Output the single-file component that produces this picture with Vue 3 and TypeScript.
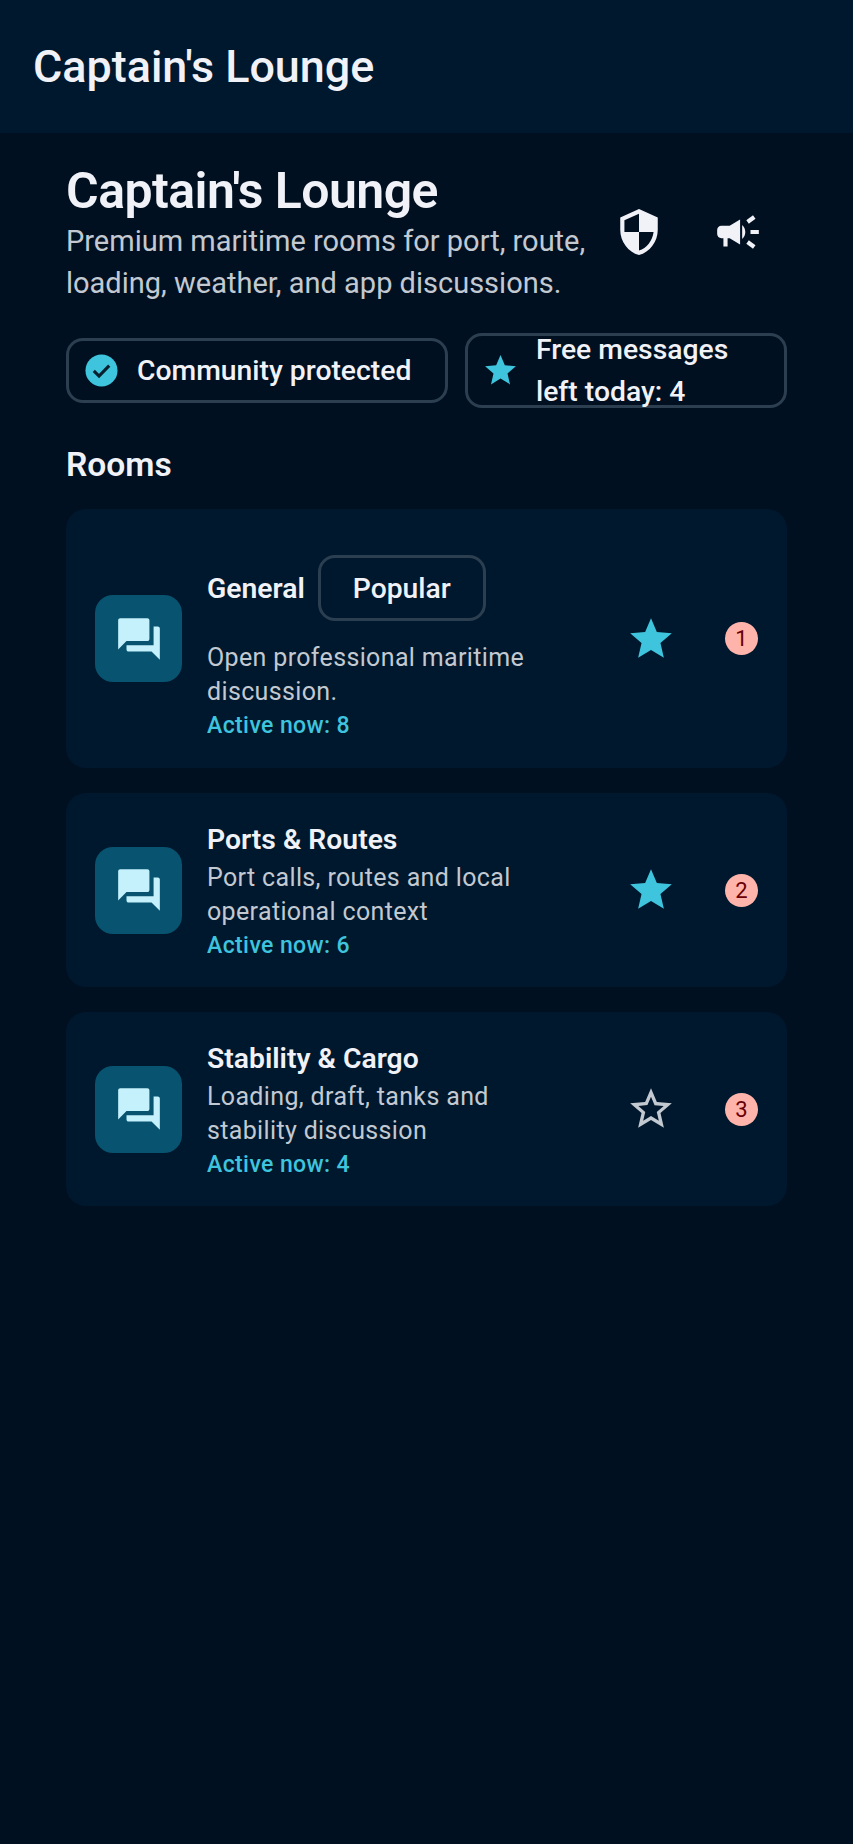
<template>
  <div class="screen">
    <header class="topbar">
      <h1 class="topbar-title">Captain's Lounge</h1>
    </header>

    <main class="content">
      <section class="hero">
        <div class="hero-text">
          <h2 class="hero-title">Captain's Lounge</h2>
          <p class="hero-sub">Premium maritime rooms for port, route, loading, weather, and app discussions.</p>
        </div>
        <div class="hero-actions">
          <svg class="action" viewBox="0 0 24 24" width="50" height="50">
            <path fill="#f1f2f8" d="M12 1 3 5v6c0 5.55 3.84 10.74 9 12 5.16-1.26 9-6.45 9-12V5l-9-4zm0 10.99h7c-.53 4.12-3.28 7.79-7 8.94V12H5V6.3l7-3.11v8.8z" />
          </svg>
          <svg class="action" viewBox="0 0 24 24" width="50" height="50">
            <path fill="#f1f2f8" d="M18 11v2h4v-2h-4zm-2 6.61c.96.71 2.21 1.65 3.2 2.39.4-.53.8-1.07 1.2-1.6-.99-.74-2.24-1.68-3.2-2.4-.4.54-.8 1.08-1.2 1.61zM20.4 5.6c-.4-.53-.8-1.07-1.2-1.6-.99.74-2.24 1.68-3.2 2.4.4.53.8 1.07 1.2 1.6.96-.72 2.21-1.65 3.2-2.4zM4 9c-1.1 0-2 .9-2 2v2c0 1.1.9 2 2 2h1v4h2v-4h1l5 3V6L8 9H4zm11.5 3c0-1.33-.58-2.53-1.5-3.35v6.69c.92-.81 1.5-2.01 1.5-3.34z" />
          </svg>
        </div>
      </section>

      <section class="chips">
        <div class="chip chip-protected">
          <svg viewBox="0 0 24 24" width="37" height="37">
            <circle cx="12" cy="12" r="10.4" fill="#3fc4de" />
            <path fill="none" stroke="#06202f" stroke-width="2" d="m7 12.2 3.4 3.4 6.6-6.8" />
          </svg>
          <span>Community protected</span>
        </div>
        <div class="chip chip-free">
          <svg viewBox="0 0 24 24" width="37" height="37">
            <path fill="#3fc4de" d="M12 17.27 18.18 21l-1.64-7.03L22 9.24l-7.19-.61L12 2 9.19 8.63 2 9.24l5.46 4.73L5.82 21z" />
          </svg>
          <span>Free messages left today: 4</span>
        </div>
      </section>

      <h3 class="rooms-title">Rooms</h3>

      <section class="rooms">
        <article v-for="room in rooms" :key="room.id" class="room" :class="{ 'room-tall': room.tag }">
          <div class="room-icon">
            <svg viewBox="0 0 24 24" width="50" height="50">
              <path fill="#c4f1fb" d="M21 6h-2v9H6v2c0 .55.45 1 1 1h11l4 4V7c0-.55-.45-1-1-1zm-4 6V3c0-.55-.45-1-1-1H3c-.55 0-1 .45-1 1v14l4-4h10c.55 0 1-.45 1-1z" />
            </svg>
          </div>
          <div class="room-body">
            <div class="room-head">
              <span class="room-name">{{ room.name }}</span>
              <span v-if="room.tag" class="room-tag">{{ room.tag }}</span>
            </div>
            <p class="room-desc">{{ room.desc }}</p>
            <p class="room-active">Active now: {{ room.active }}</p>
          </div>
          <svg class="room-star" viewBox="0 0 24 24" width="50" height="50">
            <path v-if="room.starred" fill="#3fc4de" d="M12 17.27 18.18 21l-1.64-7.03L22 9.24l-7.19-.61L12 2 9.19 8.63 2 9.24l5.46 4.73L5.82 21z" />
            <path v-else fill="#c3c9d1" d="m22 9.24-7.19-.62L12 2 9.19 8.63 2 9.24l5.46 4.73L5.82 21 12 17.27 18.18 21l-1.63-7.03L22 9.24zM12 15.4l-3.76 2.27 1-4.28-3.32-2.88 4.38-.38L12 6.1l1.71 4.04 4.38.38-3.32 2.88 1 4.28L12 15.4z" />
          </svg>
          <span class="room-badge">{{ room.id }}</span>
        </article>
      </section>
    </main>
  </div>
</template>

<script setup lang="ts">
interface Room {
  id: number
  name: string
  tag?: string
  desc: string
  active: number
  starred: boolean
}

const rooms: Room[] = [
  { id: 1, name: 'General', tag: 'Popular', desc: 'Open professional maritime discussion.', active: 8, starred: true },
  { id: 2, name: 'Ports & Routes', desc: 'Port calls, routes and local operational context', active: 6, starred: true },
  { id: 3, name: 'Stability & Cargo', desc: 'Loading, draft, tanks and stability discussion', active: 4, starred: false },
]
</script>

<style>
body {
  background: #001021;
}
</style>

<style scoped>
.screen {
  width: 853px;
  height: 1844px;
  overflow: hidden;
  background: #001021;
  color: #f1f2f8;
  font-family: Roboto, "Noto Sans", sans-serif;
}

.topbar {
  height: 133px;
  display: flex;
  align-items: center;
  padding-left: 33px;
  box-sizing: border-box;
  background: #00182d;
}

.topbar-title {
  margin: 0;
  font-size: 44.9px;
  font-weight: 500;
}

.content {
  padding: 30px 66px 0;
}

.hero {
  display: flex;
  align-items: center;
}

.hero-text {
  width: 530px;
}

.hero-title {
  margin: 0;
  font-size: 50px;
  line-height: 57px;
  font-weight: 600;
  letter-spacing: -0.55px;
}

.hero-sub {
  margin: 0;
  font-size: 29px;
  line-height: 42px;
  color: #c3c9d1;
}

.hero-actions {
  display: flex;
  gap: 49px;
  margin-left: 18px;
  margin-bottom: 4px;
}

.chips {
  display: flex;
  align-items: center;
  gap: 17px;
  margin-top: 29px;
}

.chip {
  display: flex;
  align-items: center;
  gap: 17px;
  box-sizing: border-box;
  border: 3px solid #2b3f50;
  border-radius: 17px;
  padding-left: 14px;
  font-size: 28.3px;
  font-weight: 500;
}

.chip-protected {
  width: 382px;
  height: 65px;
}

.chip-free {
  width: 322px;
  height: 75px;
}

.chip-free span {
  line-height: 42px;
  width: 210px;
}

.rooms-title {
  margin: 35px 0 0;
  font-size: 33.6px;
  line-height: 44px;
  font-weight: 600;
}

.rooms {
  display: flex;
  flex-direction: column;
  gap: 25px;
  margin-top: 22px;
}

.room {
  display: flex;
  align-items: center;
  box-sizing: border-box;
  height: 194px;
  padding: 0 29px;
  border-radius: 20px;
  background: #00182d;
}

.room-tall {
  height: 259px;
}

.room-icon {
  flex: none;
  width: 87px;
  height: 87px;
  border-radius: 18px;
  background: #08536f;
  display: flex;
  align-items: center;
  justify-content: center;
}

.room-body {
  box-sizing: border-box;
  width: 415px;
  padding: 2px 60px 0 0;
  margin-left: 25px;
}

.room-tall .room-body {
  padding-top: 0;
}

.room-head {
  display: flex;
  align-items: center;
  gap: 13px;
}

.room-name {
  font-size: 28.3px;
  line-height: 40px;
  font-weight: 600;
}

.room-tall .room-name {
  margin-top: 8px;
}

.room-tag {
  display: flex;
  align-items: center;
  justify-content: center;
  box-sizing: border-box;
  width: 168px;
  height: 66px;
  margin: 21px 0 14px;
  border: 3px solid #2b3f50;
  border-radius: 17px;
  font-size: 28.3px;
  font-weight: 500;
}

.room-desc {
  margin: 1px 0 0;
  font-size: 25px;
  line-height: 34px;
  letter-spacing: 0.35px;
  color: #c3c9d1;
}

.room-tall .room-desc {
  margin-top: 6px;
}

.room-active {
  margin: 0;
  font-size: 23px;
  line-height: 34px;
  font-weight: 500;
  letter-spacing: 0.4px;
  color: #3fc4de;
}

.room-star {
  flex: none;
  margin-left: 24px;
}

.room-badge {
  flex: none;
  width: 33px;
  height: 33px;
  margin-left: 49px;
  border-radius: 50%;
  background: #ffb4ab;
  color: #690005;
  font-size: 22px;
  line-height: 33px;
  text-align: center;
}
</style>
